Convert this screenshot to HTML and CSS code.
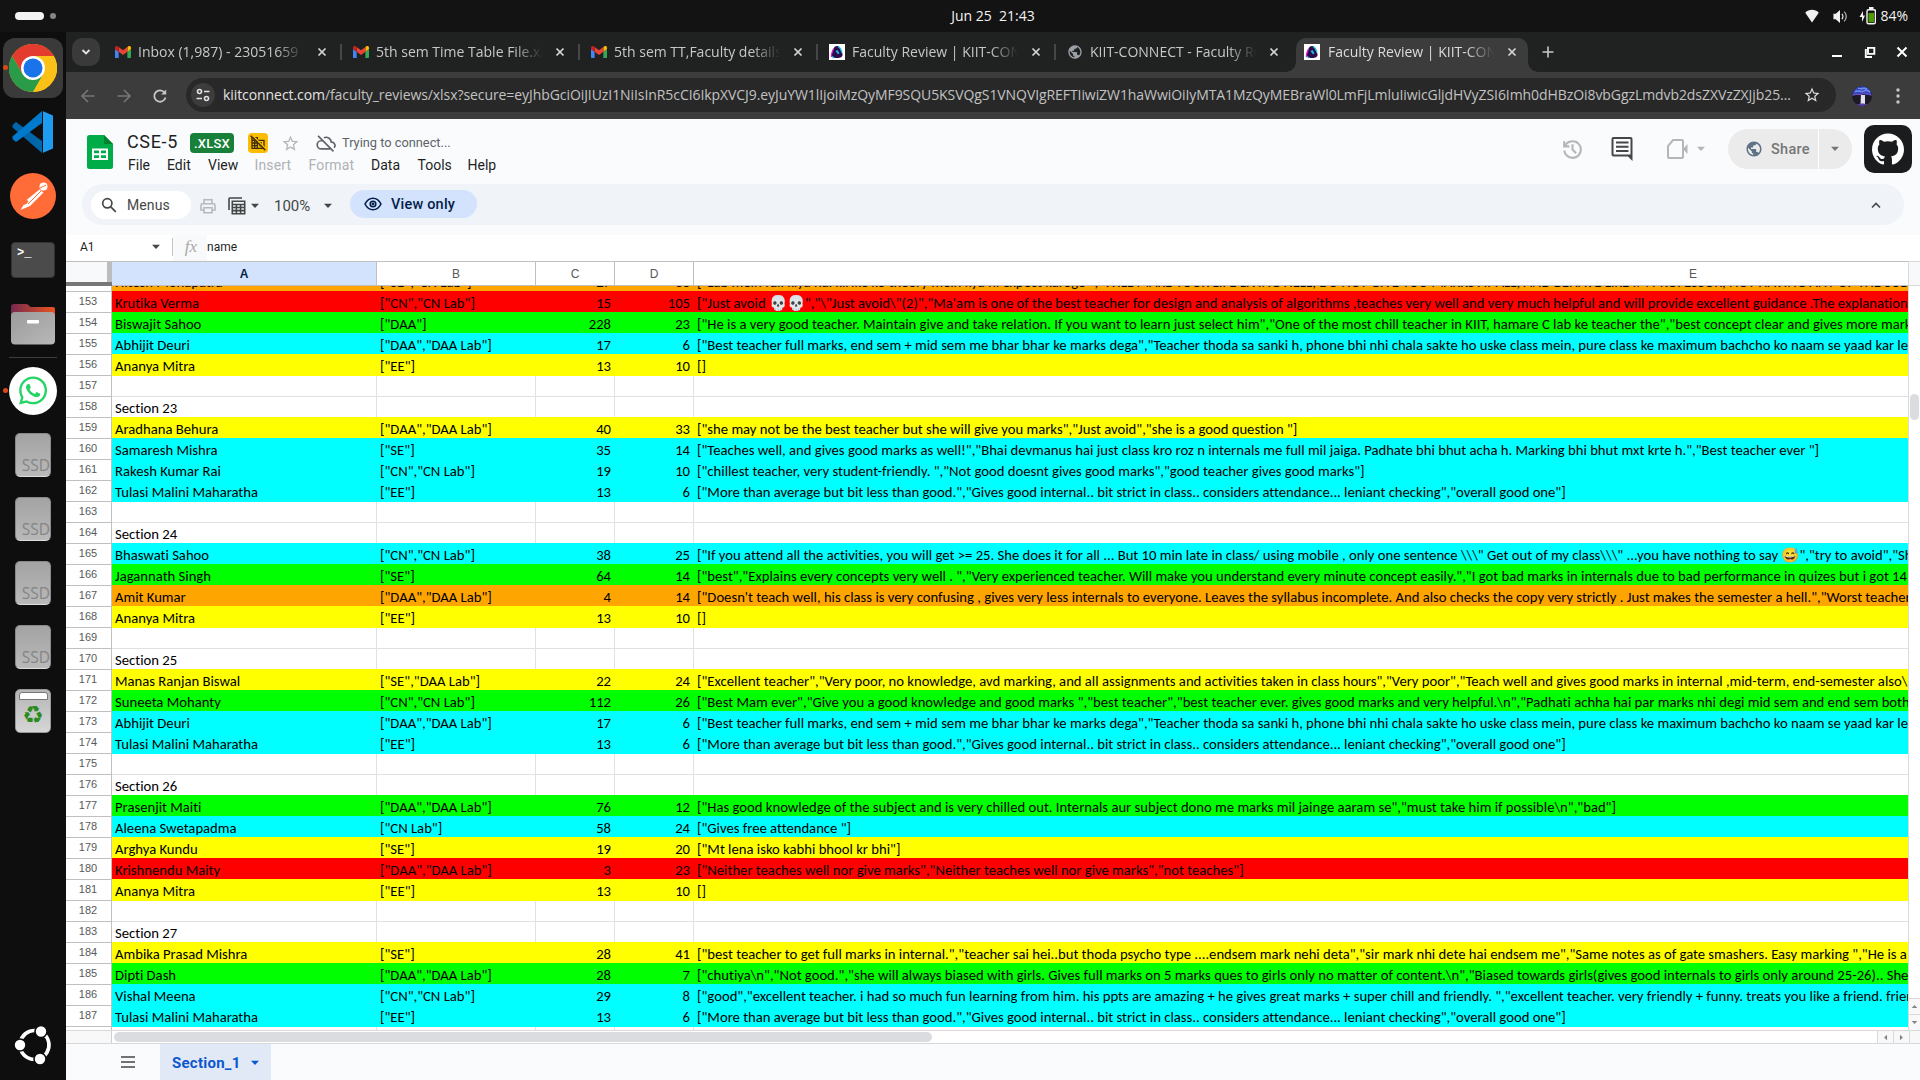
FILE: index.html
```
<!DOCTYPE html>
<html lang="en">
<head>
<meta charset="utf-8">
<title>Faculty Review | KIIT-CONNECT</title>
<link rel="stylesheet" href="styles.css">
</head>
<body>
<svg class="defs" width="0" height="0" aria-hidden="true">
  <symbol id="gmail" viewBox="52 42 88 66">
    <path fill="#4285f4" d="M58 108h14V74L52 59v43c0 3.32 2.69 6 6 6"/>
    <path fill="#34a853" d="M120 108h14c3.32 0 6-2.69 6-6V59l-20 15"/>
    <path fill="#fbbc04" d="M120 48v26l20-15v-8c0-7.42-8.47-11.65-14.4-7.2"/>
    <path fill="#ea4335" d="M72 74V48l24 18 24-18v26L96 92"/>
    <path fill="#c5221f" d="M52 51v8l20 15V48l-5.6-4.2c-5.94-4.45-14.4-.22-14.4 7.2"/>
  </symbol>
  <symbol id="kiit" viewBox="0 0 16 16">
    <rect width="16" height="16" fill="#fff"/>
    <path fill="#2b0b4e" d="M8 2c2 0 3 1 4 4l1.500 4c.5 3-2 4-5.500 4s-6-1-5.500-4L4 6c1-3 2-4 4-4z"/>
    <path fill="none" stroke="#e21bd0" stroke-width="1.300" d="M2.500 13C2 10 3.500 7 4.500 5"/>
    <path fill="none" stroke="#20c7e8" stroke-width="1.300" d="M9 2.500c2 .5 3 3 4 6M3 12.500l2 1.500"/>
    <path fill="#18b8d8" d="M6.500 7l2-1 2 3-1.500 1.500z"/>
  </symbol>
  <symbol id="x" viewBox="0 0 10 10"><path d="M1.500 1.500l7 7M8.500 1.500l-7 7" fill="none" stroke="currentColor" stroke-width="1.700"/></symbol>
  <symbol id="caret" viewBox="0 0 10 6"><path d="M1 .8h8L5 5z" fill="currentColor"/></symbol>
  <symbol id="star" viewBox="0 0 24 24"><path fill="currentColor" d="M22 9.240l-7.190-.62L12 2 9.190 8.630 2 9.240l5.460 4.730L5.820 21 12 17.270 18.180 21l-1.630-7.030L22 9.240zM12 15.400l-3.760 2.270 1-4.280-3.320-2.880 4.380-.38L12 6.100l1.710 4.040 4.380.38-3.320 2.880 1 4.280L12 15.400z"/></symbol>
  <symbol id="globe" viewBox="0 0 24 24"><path fill="currentColor" d="M12 2C6.480 2 2 6.480 2 12s4.480 10 10 10 10-4.480 10-10S17.520 2 12 2zm-1 17.930c-3.950-.49-7-3.850-7-7.930 0-.62.08-1.210.21-1.790L9 15v1c0 1.100.9 2 2 2v1.930zm6.900-2.540c-.26-.81-1-1.390-1.900-1.390h-1v-3c0-.55-.45-1-1-1H8v-2h2c.55 0 1-.45 1-1V7h2c1.100 0 2-.9 2-2v-.41c2.930 1.190 5 4.060 5 7.410 0 2.080-.8 3.970-2.100 5.390z"/></symbol>
</svg>

<header class="sysbar">
  <div class="workspaces"><i class="ws-on"></i><i class="ws-off"></i></div>
  <div class="clock">Jun 25&nbsp; 21:43</div>
  <div class="tray">
    <svg class="wifi" viewBox="0 0 16 16"><path fill="#f2f2f2" d="M8 15.500L.3 4.200C4.500-.2 11.500-.2 15.700 4.200z"/></svg>
    <svg class="vol" viewBox="0 0 16 16"><path fill="#f2f2f2" d="M1 5h2.500L8 1v14l-4.500-4H1z"/><path fill="none" stroke="#f2f2f2" stroke-width="1.400" d="M10 5.200c1.400 1.500 1.400 4.100 0 5.600"/><path fill="none" stroke="#aaa" stroke-width="1.400" d="M12.400 2.800c3 3 3 7.400 0 10.400"/></svg>
    <svg class="bat" viewBox="0 0 17 18"><path fill="#f2f2f2" d="M4 4L.5 10H3v5l3-6.500H4z"/><rect x="8" y="2.700" width="8.400" height="14" rx="1.500" fill="none" stroke="#f2f2f2" stroke-width="1.400"/><path fill="#f2f2f2" d="M10 0h4.500v2.500H10z"/><path fill="#4e9a06" d="M9.500 6h5.500v9.300H9.500z"/></svg>
    <span>84%</span>
  </div>
</header>

<div class="desktop">
<nav class="dock">
  <div class="slot running"><div class="active-tile">
    <svg width="48" height="48" viewBox="0 0 48 48"><circle cx="24" cy="24" r="24" fill="#fbc116"/><path fill="#e33b2e" d="M24 12h20.800A24 24 0 0 0 3.200 12l10.400 18z"/><path fill="#2a9b48" d="M13.600 30L3.200 12A24 24 0 0 0 24 48l10.400-18z"/><path fill="#fbc116" d="M44.800 12H24l10.400 18L24 48a24 24 0 0 0 20.800-36z"/><circle cx="24" cy="24" r="12" fill="#fff"/><circle cx="24" cy="24" r="9.500" fill="#1a73e8"/></svg>
  </div></div>
  <div class="slot"><svg width="44" height="44" viewBox="0 0 44 44"><path fill="#0065a9" d="M5 12L1.500 15v2.500L31 43V31z"/><path fill="#007acc" d="M5 32l-3.500-3v-2.500L31 1v12z"/><path fill="#1f9cf0" d="M31 .8l11 4.700v33L31 43.200c1 0 1-1 1-2V3c0-1 0-2-1-2.200z"/></svg></div>
  <div class="slot"><svg width="46" height="46" viewBox="0 0 46 46"><circle cx="23" cy="23" r="23" fill="#ff6c37"/><circle cx="33.500" cy="13.500" r="4" fill="#fff"/><path fill="#fff" d="M29.500 16.500l4 3L20 33l-9.500 4 3-5 3-1 2-3-2-1z"/><path stroke="#ff6c37" fill="none" d="M31 18L18 31M30 15l6-3"/></svg></div>
  <div class="slot"><div class="term">&gt;_</div></div>
  <div class="slot"><svg width="46" height="42" viewBox="0 0 46 42"><defs><linearGradient id="fg"><stop offset="0" stop-color="#77294f"/><stop offset="1" stop-color="#e95420"/></linearGradient><linearGradient id="gg" x2="1" y2="1"><stop offset="0" stop-color="#9b9b9b"/><stop offset="1" stop-color="#b8b8b8"/></linearGradient></defs><path fill="url(#fg)" d="M1 4q0-3 3-3h12q2 0 3 1.500L20.500 4H43q2 0 2 2v10H1z"/><rect x="1" y="9" width="44" height="32.500" rx="4" fill="url(#gg)"/><rect x="17" y="17" width="12" height="3.500" rx="1" fill="#fff"/></svg></div>
  <hr class="dock-rule">
  <div class="slot running"><svg width="48" height="48" viewBox="0 0 48 48"><circle cx="24" cy="24" r="24" fill="#fff"/><g transform="translate(10 9.500) scale(1.170)"><path fill="#25d366" d="M17.472 14.382c-.297-.149-1.758-.867-2.030-.967-.273-.099-.471-.148-.67.150-.197.297-.767.966-.94 1.164-.173.199-.347.223-.644.075-.297-.150-1.255-.463-2.390-1.475-.883-.788-1.480-1.761-1.653-2.059-.173-.297-.018-.458.130-.606.134-.133.298-.347.446-.52.149-.174.198-.298.298-.497.099-.198.050-.371-.025-.52-.075-.149-.669-1.612-.916-2.207-.242-.579-.487-.5-.669-.51-.173-.008-.371-.010-.57-.010-.198 0-.52.074-.792.372-.272.297-1.040 1.016-1.040 2.479 0 1.462 1.065 2.875 1.213 3.074.149.198 2.096 3.200 5.077 4.487.709.306 1.262.489 1.694.625.712.227 1.360.195 1.871.118.571-.085 1.758-.719 2.006-1.413.248-.694.248-1.289.173-1.413-.074-.124-.272-.198-.57-.347m-5.421 7.403h-.004a9.870 9.870 0 01-5.031-1.378l-.361-.214-3.741.982.998-3.648-.235-.374a9.860 9.860 0 01-1.510-5.260c.001-5.450 4.436-9.884 9.888-9.884 2.640 0 5.122 1.030 6.988 2.898a9.825 9.825 0 012.893 6.994c-.003 5.450-4.437 9.884-9.885 9.884m8.413-18.297A11.815 11.815 0 0012.050 0C5.495 0 .160 5.335.157 11.892c0 2.096.547 4.142 1.588 5.945L.057 24l6.305-1.654a11.882 11.882 0 005.683 1.448h.005c6.554 0 11.890-5.335 11.893-11.893a11.821 11.821 0 00-3.480-8.413z"/></g></svg></div>
  <div class="slot"><div class="ssd">SSD</div></div>
  <div class="slot"><div class="ssd">SSD</div></div>
  <div class="slot"><div class="ssd">SSD</div></div>
  <div class="slot"><div class="ssd">SSD</div></div>
  <div class="slot"><div class="trash"><i></i><b>♻</b></div></div>
  <div class="slot apps"><svg width="40" height="40" viewBox="0 0 40 40"><g fill="none" stroke="#fff" stroke-width="3.600"><circle cx="21.500" cy="20" r="14.500" stroke-dasharray="25.400 4.970" stroke-dashoffset="-2.500" transform="rotate(-60 21.500 20)"/></g><g fill="#fff" stroke="#0e0e0e" stroke-width="1.600"><circle cx="7" cy="20" r="6"/><circle cx="28" cy="6.500" r="6"/><circle cx="27" cy="34" r="6"/></g></svg></div>
</nav>

<main class="browser">
  <div class="tabstrip">
    <div class="tabsearch"><svg width="10" height="8" viewBox="0 0 10 8"><path d="M1.500 2L5 5.500 8.500 2" fill="none" stroke="#e3e3e3" stroke-width="1.800"/></svg></div>
    <div class="tab"><svg class="fav"><use href="#gmail"/></svg><span>Inbox (1,987) - 23051659</span><svg class="close"><use href="#x"/></svg></div>
    <div class="tab"><svg class="fav"><use href="#gmail"/></svg><span>5th sem Time Table File.xlsx</span><svg class="close"><use href="#x"/></svg></div>
    <div class="tab"><svg class="fav"><use href="#gmail"/></svg><span>5th sem TT,Faculty details</span><svg class="close"><use href="#x"/></svg></div>
    <div class="tab"><svg class="fav"><use href="#kiit"/></svg><span>Faculty Review | KIIT-CONNECT</span><svg class="close"><use href="#x"/></svg></div>
    <div class="tab last"><svg class="fav grey"><use href="#globe"/></svg><span>KIIT-CONNECT - Faculty Review</span><svg class="close"><use href="#x"/></svg></div>
    <div class="tab current"><svg class="fav"><use href="#kiit"/></svg><span>Faculty Review | KIIT-CONNECT</span><svg class="close"><use href="#x"/></svg></div>
    <svg class="newtab" viewBox="0 0 12 12"><path d="M6 .5v11M.5 6h11" stroke="#c7c7c7" stroke-width="1.600"/></svg>
    <div class="winbtns">
      <svg width="12" height="12" viewBox="0 0 12 12"><path d="M1 10h10" stroke="#fff" stroke-width="2"/></svg>
      <svg width="12" height="12" viewBox="0 0 12 12"><path d="M4 1.900h6.300v6H4zM1.800 3v8H8" fill="none" stroke="#fff" stroke-width="1.900"/></svg>
      <svg width="12" height="12" viewBox="0 0 12 12"><path d="M1.500 1.500l9 9M10.500 1.500l-9 9" stroke="#fff" stroke-width="2"/></svg>
    </div>
  </div>

  <div class="navbar">
    <svg class="nav-ic dim" viewBox="0 0 16 16"><path d="M14.500 8H2M8 2L2 8l6 6" fill="none" stroke="currentColor" stroke-width="1.700"/></svg>
    <svg class="nav-ic dim" viewBox="0 0 16 16"><path d="M1.500 8H14M8 2l6 6-6 6" fill="none" stroke="currentColor" stroke-width="1.700"/></svg>
    <svg class="nav-ic" viewBox="0 0 16 16"><path d="M13.500 9.500A5.700 5.700 0 1 1 12.500 4.500" fill="none" stroke="currentColor" stroke-width="1.800"/><path d="M14.200 1.500v5H9.200z" fill="currentColor"/></svg>
    <div class="omnibox">
      <div class="siteinfo"><svg width="14" height="14" viewBox="0 0 14 14" fill="none" stroke="#e3e3e3" stroke-width="1.600"><circle cx="3.500" cy="3.500" r="2"/><path d="M8 3.500h5.500M.5 10.500H6"/><circle cx="10.500" cy="10.500" r="2"/></svg></div>
      <div class="url"><b>kiitconnect.com</b>/faculty_reviews/xlsx?secure=eyJhbGciOiJIUzI1NiIsInR5cCI6IkpXVCJ9.eyJuYW1lIjoiMzQyMF9SQU5KSVQgS1VNQVIgREFTIiwiZW1haWwiOiIyMTA1MzQyMEBraWl0LmFjLmluIiwicGljdHVyZSI6Imh0dHBzOi8vbGgzLmdvb2dsZXVzZXJjb25…</div>
      <svg class="bookmark"><use href="#star"/></svg>
    </div>
    <svg class="avatar" viewBox="0 0 20 20"><clipPath id="ac"><circle cx="10" cy="10" r="10"/></clipPath><g clip-path="url(#ac)"><rect width="20" height="20" fill="#1c1a26"/><path fill="#3347b8" d="M0 10C1 3 5 0 10 0s9 3 10 10c-3-2-6 0-8-2-4 2-8 0-12 2z"/><path fill="none" stroke="#6f8df0" stroke-width="1.500" d="M3 6c3-3 6 1 9-1s4 0 6 1M6 2c3 2 6-1 9 1"/><path fill="none" stroke="#8d4bc0" d="M1 9c4-2 6 1 9-1s6 0 9 1"/><path fill="#e6e0ea" d="M9 9h4v9H8.500z"/><path fill="#5b3fb0" d="M4 19c3-2 9-2 12 0v1H4z"/></g></svg>
    <svg class="dots" viewBox="0 0 4 16" fill="#c7c7c7"><circle cx="2" cy="2" r="1.700"/><circle cx="2" cy="8" r="1.700"/><circle cx="2" cy="14" r="1.700"/></svg>
  </div>

  <section class="sheets">
    <div class="dochead">
      <svg class="logo" viewBox="0 0 26 34"><path fill="#00ac47" d="M2.500 0H17l9 9v22.500q0 2.500-2.500 2.500h-21Q0 34 0 31.500v-29Q0 0 2.500 0z"/><path fill="#00832d" d="M17 0l9 9h-9z"/><path fill="#fff" fill-rule="evenodd" d="M5 13.500h16V25H5zm2 2v2.700h5v-2.700zm7 0v2.700h5v-2.700zm-7 4.700V23h5v-2.800zm7 0V23h5v-2.800z"/></svg>
      <div class="titles">
        <div class="title-row">
          <span class="doc-name">CSE-5</span><span class="xlsx">.XLSX</span>
          <span class="org"><svg width="16" height="16" viewBox="0 0 24 24"><path fill="#402f00" fill-rule="evenodd" d="M2 3h10v4h10v14H2zm2 2v2h2V5zm4 0v2h2V5zM4 9v2h2V9zm4 0v2h2V9zm-4 4v2h2v-2zm4 0v2h2v-2zm-4 4v2h2v-2zm4 0v2h2v-2zm4-8v10h8V9zm2 2h4v2h-4zm0 4h4v2h-4z"/><path stroke="#fbbc04" stroke-width="2" d="M3 0l21 21"/><path stroke="#402f00" stroke-width="2.200" d="M1 1l22 22"/></svg></span>
          <svg class="fav-star"><use href="#star"/></svg>
          <svg class="cloud" viewBox="0 0 24 24"><path fill="none" stroke="#5f6368" stroke-width="2" d="M9.500 5.600A6.500 6.500 0 0 1 18.400 11 4 4 0 0 1 21.700 17.700M18 19H6.500a4.800 4.800 0 0 1-.4-9.700L8 9M2.500 3.500l18.500 18.500"/></svg>
          <span class="status">Trying to connect...</span>
        </div>
        <div class="menus"><span>File</span><span>Edit</span><span>View</span><span class="off">Insert</span><span class="off">Format</span><span>Data</span><span>Tools</span><span>Help</span></div>
      </div>
      <div class="actions">
        <svg class="history" viewBox="0 0 24 24"><path fill="#b4b6b9" d="M12 21q-3.450 0-6.010-2.290T3.050 13H5.100q.35 2.600 2.310 4.300T12 19q2.930 0 4.960-2.040T19 12t-2.040-4.960T12 5q-1.730 0-3.230.8T6.250 8H9v2H3V4h2v2.350q1.280-1.600 3.110-2.470T12 3q1.880 0 3.510.71t2.850 1.930 1.930 2.850T21 12t-.71 3.510-1.930 2.850-2.850 1.930T12 21zm2.800-4.800L11 12.400V7h2v4.600l3.200 3.200z"/></svg>
        <svg class="comment" viewBox="0 0 22 24"><path fill="#444746" fill-rule="evenodd" d="M2.500 0h17Q21.500 0 21.500 2v22L17 19.500H2.500Q.5 19.500.5 17.500V2Q.5 0 2.500 0zm0 2v15.500h17V2z"/><path stroke="#444746" stroke-width="2" d="M5 5.500h12.500M5 9.700h12.500M5 14h12.500"/></svg>
        <svg class="camera" viewBox="0 0 22 20"><path fill="none" stroke="#b4b6b9" stroke-width="2" d="M6 1h9q1 0 1 1v16q0 1-1 1H2q-1 0-1-1V7z"/><path fill="#b4b6b9" d="M16 10L20.500 5v10z"/></svg>
        <svg class="caret cam-caret"><use href="#caret"/></svg>
        <div class="share"><span class="share-main"><svg class="globe"><use href="#globe"/></svg>Share</span><span class="share-more"><svg class="caret"><use href="#caret"/></svg></span></div>
        <div class="github"><svg width="32" height="32" viewBox="0 0 24 24"><path fill="#fff" d="M12 .297c-6.630 0-12 5.373-12 12 0 5.303 3.438 9.800 8.205 11.385.6.113.82-.258.82-.577 0-.285-.010-1.040-.015-2.040-3.338.724-4.042-1.610-4.042-1.610C4.422 18.070 3.633 17.700 3.633 17.700c-1.087-.744.084-.729.084-.729 1.205.084 1.838 1.236 1.838 1.236 1.070 1.835 2.809 1.305 3.495.998.108-.776.417-1.305.760-1.605-2.665-.3-5.466-1.332-5.466-5.930 0-1.310.465-2.380 1.235-3.220-.135-.303-.54-1.523.105-3.176 0 0 1.005-.322 3.300 1.230.96-.267 1.980-.399 3-.405 1.020.006 2.040.138 3 .405 2.280-1.552 3.285-1.230 3.285-1.230.645 1.653.240 2.873.120 3.176.765.840 1.230 1.910 1.230 3.220 0 4.610-2.805 5.625-5.475 5.920.420.360.810 1.096.810 2.220 0 1.606-.015 2.896-.015 3.286 0 .315.210.690.825.570C20.565 22.092 24 17.592 24 12.297c0-6.627-5.373-12-12-12"/></svg></div>
      </div>
    </div>

    <div class="toolbar">
      <div class="search-menus"><svg width="16" height="16" viewBox="0 0 16 16" fill="none" stroke="#444746" stroke-width="1.700"><circle cx="6.300" cy="6.300" r="4.600"/><path d="M9.800 9.800l5 5"/></svg>Menus</div>
      <svg class="print" viewBox="0 0 16 16" fill="none" stroke="#b7babd" stroke-width="1.600"><path d="M4 5.500V1.800h8v3.700M4 12H1V7.200q0-1.500 1.500-1.500h11q1.500 0 1.500 1.500V12h-3M4 9.800h8v5H4z"/></svg>
      <svg class="views" viewBox="0 0 18 18" fill="none" stroke="#444746" stroke-width="1.600"><path d="M1 13V1.800q0-.8.8-.8H14M4.300 4.300h12.400v12.400H4.300zM4.300 7.500h12.400M4.300 10.500h12.400M4.300 13.600h12.400M8.400 7.500v9M12.600 7.500v9"/></svg>
      <svg class="caret c1"><use href="#caret"/></svg>
      <span class="zoom">100%</span>
      <svg class="caret c2"><use href="#caret"/></svg>
      <div class="view-only"><svg width="18" height="14" viewBox="0 0 18 14" fill="none" stroke="#041e49" stroke-width="1.600"><path d="M1 7q3-5.800 8-5.800T17 7q-3 5.800-8 5.800T1 7z"/><circle cx="9" cy="7" r="2.800"/><circle cx="9" cy="7" r=".6"/></svg>View only</div>
      <svg class="collapse" viewBox="0 0 10 8"><path d="M1 6.500l4-4 4 4" fill="none" stroke="#444746" stroke-width="1.600"/></svg>
    </div>

    <div class="formula">
      <div class="namebox">A1<svg class="caret"><use href="#caret"/></svg></div>
      <div class="fx">fx</div>
      <div class="fval">name</div>
    </div>

    <div class="gridwrap">
      <div class="grid">
        <div class="colheads"><div class="corner"></div><div class="sel">A</div><div>B</div><div>C</div><div>D</div><div>E</div></div>
        <div class="rows">
          <div class="row o"><i>152</i><p>Hitesh Mohapatra</p><p>["SE","CN Lab"]</p><p>27</p><p>33</p><p>["Lab mein full kiya nai kiHke ko theory mein kya hi expect karoge ","WILL MAKE YOUR LIFE LIVING HELL, DO NOT GIVE YOU MARKS AT ALL, AND BEHAVE LIKE IM PROFESSOR, NOT HAVING ANY OF THE SUBJECT</p></div>
          <div class="row r"><i>153</i><p>Krutika Verma</p><p>["CN","CN Lab"]</p><p>15</p><p>105</p><p>["Just avoid 💀💀","\"Just avoid\"(2)","Ma'am is one of the best teacher for design and analysis of algorithms ,teaches very well and very much helpful and will provide excellent guidance .The explanation</p></div>
          <div class="row g"><i>154</i><p>Biswajit Sahoo</p><p>["DAA"]</p><p>228</p><p>23</p><p>["He is a very good teacher. Maintain give and take relation. If you want to learn just select him","One of the most chill teacher in KIIT, hamare C lab ke teacher the","best concept clear and gives more marks</p></div>
          <div class="row c"><i>155</i><p>Abhijit Deuri</p><p>["DAA","DAA Lab"]</p><p>17</p><p>6</p><p>["Best teacher full marks, end sem + mid sem me bhar bhar ke marks dega","Teacher thoda sa sanki h, phone bhi nhi chala sakte ho uske class mein, pure class ke maximum bachcho ko naam se yaad kar le</p></div>
          <div class="row y"><i>156</i><p>Ananya Mitra</p><p>["EE"]</p><p>13</p><p>10</p><p>[]</p></div>
          <div class="row"><i>157</i><p></p><p></p><p></p><p></p><p></p></div>
          <div class="row"><i>158</i><p>Section 23</p><p></p><p></p><p></p><p></p></div>
          <div class="row y"><i>159</i><p>Aradhana Behura</p><p>["DAA","DAA Lab"]</p><p>40</p><p>33</p><p>["she may not be the best teacher but she will give you marks","Just avoid","she is a good question "]</p></div>
          <div class="row c"><i>160</i><p>Samaresh Mishra</p><p>["SE"]</p><p>35</p><p>14</p><p>["Teaches well, and gives good marks as well!","Bhai devmanus hai just class kro roz n internals me full mil jaiga. Padhate bhi bhut acha h. Marking bhi bhut mxt krte h.","Best teacher ever "]</p></div>
          <div class="row c"><i>161</i><p>Rakesh Kumar Rai</p><p>["CN","CN Lab"]</p><p>19</p><p>10</p><p>["chillest teacher, very student-friendly. ","Not good doesnt gives good marks","good teacher gives good marks"]</p></div>
          <div class="row c"><i>162</i><p>Tulasi Malini Maharatha</p><p>["EE"]</p><p>13</p><p>6</p><p>["More than average but bit less than good.","Gives good internal.. bit strict in class.. considers attendance... leniant checking","overall good one"]</p></div>
          <div class="row"><i>163</i><p></p><p></p><p></p><p></p><p></p></div>
          <div class="row"><i>164</i><p>Section 24</p><p></p><p></p><p></p><p></p></div>
          <div class="row c"><i>165</i><p>Bhaswati Sahoo</p><p>["CN","CN Lab"]</p><p>38</p><p>25</p><p>["If you attend all the activities, you will get &gt;= 25. She does it for all ... But 10 min late in class/ using mobile , only one sentence \\\" Get out of my class\\\" ...you have nothing to say 😅","try to avoid","She</p></div>
          <div class="row g"><i>166</i><p>Jagannath Singh</p><p>["SE"]</p><p>64</p><p>14</p><p>["best","Explains every concepts very well . ","Very experienced teacher. Will make you understand every minute concept easily.","I got bad marks in internals due to bad performance in quizes but i got 14</p></div>
          <div class="row o"><i>167</i><p>Amit Kumar</p><p>["DAA","DAA Lab"]</p><p>4</p><p>14</p><p>["Doesn't teach well, his class is very confusing , gives very less internals to everyone. Leaves the syllabus incomplete. And also checks the copy very strictly . Just makes the semester a hell.","Worst teacher</p></div>
          <div class="row y"><i>168</i><p>Ananya Mitra</p><p>["EE"]</p><p>13</p><p>10</p><p>[]</p></div>
          <div class="row"><i>169</i><p></p><p></p><p></p><p></p><p></p></div>
          <div class="row"><i>170</i><p>Section 25</p><p></p><p></p><p></p><p></p></div>
          <div class="row y"><i>171</i><p>Manas Ranjan Biswal</p><p>["SE","DAA Lab"]</p><p>22</p><p>24</p><p>["Excellent teacher","Very poor, no knowledge, avd marking, and all assignments and activities taken in class hours","Very poor","Teach well and gives good marks in internal ,mid-term, end-semester also\</p></div>
          <div class="row g"><i>172</i><p>Suneeta Mohanty</p><p>["CN","CN Lab"]</p><p>112</p><p>26</p><p>["Best Mam ever","Give you a good knowledge and good marks ","best teacher","best teacher ever. gives good marks and very helpful.\n","Padhati achha hai par marks nhi degi mid sem and end sem both</p></div>
          <div class="row c"><i>173</i><p>Abhijit Deuri</p><p>["DAA","DAA Lab"]</p><p>17</p><p>6</p><p>["Best teacher full marks, end sem + mid sem me bhar bhar ke marks dega","Teacher thoda sa sanki h, phone bhi nhi chala sakte ho uske class mein, pure class ke maximum bachcho ko naam se yaad kar le</p></div>
          <div class="row c"><i>174</i><p>Tulasi Malini Maharatha</p><p>["EE"]</p><p>13</p><p>6</p><p>["More than average but bit less than good.","Gives good internal.. bit strict in class.. considers attendance... leniant checking","overall good one"]</p></div>
          <div class="row"><i>175</i><p></p><p></p><p></p><p></p><p></p></div>
          <div class="row"><i>176</i><p>Section 26</p><p></p><p></p><p></p><p></p></div>
          <div class="row g"><i>177</i><p>Prasenjit Maiti</p><p>["DAA","DAA Lab"]</p><p>76</p><p>12</p><p>["Has good knowledge of the subject and is very chilled out. Internals aur subject dono me marks mil jainge aaram se","must take him if possible\n","bad"]</p></div>
          <div class="row c"><i>178</i><p>Aleena Swetapadma</p><p>["CN Lab"]</p><p>58</p><p>24</p><p>["Gives free attendance "]</p></div>
          <div class="row y"><i>179</i><p>Arghya Kundu</p><p>["SE"]</p><p>19</p><p>20</p><p>["Mt lena isko kabhi bhool kr bhi"]</p></div>
          <div class="row r"><i>180</i><p>Krishnendu Maity</p><p>["DAA","DAA Lab"]</p><p>3</p><p>23</p><p>["Neither teaches well nor give marks","Neither teaches well nor give marks","not teaches"]</p></div>
          <div class="row y"><i>181</i><p>Ananya Mitra</p><p>["EE"]</p><p>13</p><p>10</p><p>[]</p></div>
          <div class="row"><i>182</i><p></p><p></p><p></p><p></p><p></p></div>
          <div class="row"><i>183</i><p>Section 27</p><p></p><p></p><p></p><p></p></div>
          <div class="row y"><i>184</i><p>Ambika Prasad Mishra</p><p>["SE"]</p><p>28</p><p>41</p><p>["best teacher to get full marks in internal.","teacher sai hei..but thoda psycho type ....endsem mark nehi deta","sir mark nhi dete hai endsem me","Same notes as of gate smashers. Easy marking ","He is a</p></div>
          <div class="row g"><i>185</i><p>Dipti Dash</p><p>["DAA","DAA Lab"]</p><p>28</p><p>7</p><p>["chutiya\n","Not good.","she will always biased with girls. Gives full marks on 5 marks ques to girls only no matter of content.\n","Biased towards girls(gives good internals to girls only around 25-26).. She</p></div>
          <div class="row c"><i>186</i><p>Vishal Meena</p><p>["CN","CN Lab"]</p><p>29</p><p>8</p><p>["good","excellent teacher. i had so much fun learning from him. his ppts are amazing + he gives great marks + super chill and friendly. ","excellent teacher. very friendly + funny. treats you like a friend. friendly</p></div>
          <div class="row c"><i>187</i><p>Tulasi Malini Maharatha</p><p>["EE"]</p><p>13</p><p>6</p><p>["More than average but bit less than good.","Gives good internal.. bit strict in class.. considers attendance... leniant checking","overall good one"]</p></div>
          <div class="row"><i></i><p></p><p></p><p></p><p></p><p></p></div>
        </div>
      </div>
      <div class="vscroll"><div class="vhead"></div><div class="vtrack"><div class="vthumb"></div></div><div class="sbtn"><svg class="up"><use href="#caret"/></svg></div><div class="sbtn"><svg><use href="#caret"/></svg></div></div>
    </div>
    <div class="hscroll"><div class="hcorner"></div><div class="htrack"><div class="hthumb"></div></div><div class="hbtn"><svg class="left"><use href="#caret"/></svg></div><div class="hbtn"><svg class="right"><use href="#caret"/></svg></div><div class="hend"></div></div>
    <footer class="sheetbar"><svg width="14" height="12" viewBox="0 0 14 12"><path d="M0 1h14M0 6h14M0 11h14" stroke="#444746" stroke-width="1.700"/></svg><div class="sheet-tab">Section_1<svg class="caret"><use href="#caret"/></svg></div></footer>
  </section>
</main>
</div>
</body>
</html>
```
FILE: styles.css
```
* { box-sizing: border-box; }
body { margin: 0; width: 1920px; height: 1080px; overflow: hidden; background: #0e0e0e; font-family: Roboto, "Liberation Sans", sans-serif; display: flex; flex-direction: column; }
svg { display: block; flex: none; }
.defs { position: absolute; }

/* system bar */
.sysbar { height: 32px; flex: none; background: #131313; color: #f2f2f2; font: 14px/32px "Open Sans", "Noto Sans", sans-serif; display: grid; grid-template-columns: 1fr auto 1fr; }
.workspaces { display: flex; align-items: center; gap: 6px; padding-left: 15px; }
.ws-on { width: 29px; height: 8px; border-radius: 4px; background: #f4f4f4; }
.ws-off { width: 6px; height: 6px; border-radius: 50%; background: #868686; }
.clock { line-height: 31px; padding-left: 66px; white-space: pre; }
.tray { display: flex; align-items: center; justify-content: flex-end; padding-right: 12px; }
.wifi { width: 16px; height: 14px; margin-right: 12px; }
.vol { width: 16px; height: 15px; margin-right: 11px; }
.bat { width: 17px; height: 18px; margin-right: 4px; }

.desktop { flex: 1; display: flex; min-height: 0; }

/* dock */
.dock { width: 66px; flex: none; background: #0e0e0e; display: flex; flex-direction: column; padding: 4px 0 3px; }
.slot { height: 64px; flex: none; display: flex; align-items: center; justify-content: center; position: relative; }
.running::before { content: ""; position: absolute; left: 3px; top: 29px; width: 5px; height: 5px; border-radius: 50%; background: #dd4814; z-index: 1; }
.active-tile { width: 60px; height: 60px; border-radius: 12px; background: #3a3a3a; display: flex; align-items: center; justify-content: center; }
.term { width: 44px; height: 36px; border-radius: 4px; background: #4b4b4b; border: 1px solid #333; color: #fff; font: bold 12px/18px "Liberation Mono", monospace; padding: 1px 5px; }
.dock-rule { width: 48px; height: 1px; border: 0; background: #3d3d3d; margin: 1px auto; flex: none; }
.ssd { width: 36px; height: 44px; border-radius: 5px; background: linear-gradient(#a3a3a3, #b9b9b9); border: 1px solid #8a8a8a; border-bottom-color: #ddd; color: #858585; font: 15.5px/16px "Open Sans", sans-serif; display: flex; align-items: flex-end; justify-content: flex-end; padding-bottom: 3px; }
.trash { width: 36px; height: 44px; border-radius: 5px; background: linear-gradient(#b5b5b5, #d6d6d6); border: 1px solid #999; display: flex; flex-direction: column; align-items: center; }
.trash i { width: 29px; height: 8px; background: #fff; border: 1px solid #777; border-radius: 3px 3px 0 0; margin-top: 2px; }
.trash b { color: #2b8a1f; font: 24px/30px "DejaVu Sans", sans-serif; }
.apps { margin-top: auto; }

/* browser chrome */
.browser { flex: 1; min-width: 0; display: flex; flex-direction: column; font-family: "Open Sans", "Noto Sans", sans-serif; }
.tabstrip { height: 40px; flex: none; background: #202221; display: flex; align-items: flex-start; padding-left: 6px; }
.tabsearch { width: 28px; height: 28px; margin: 6px 0 0; border-radius: 10px; background: #3a3a3a; display: flex; align-items: center; justify-content: center; margin-right: 5px; }
.tab { width: 238px; height: 34px; margin-top: 6px; padding: 0 14px 0 10px; display: flex; align-items: center; color: #c7c7c7; font-size: 14px; position: relative; }
.tab::after { content: ""; position: absolute; right: 1px; top: 6px; width: 2px; height: 16px; background: #454746; }
.tab.last::after, .tab.current::after { display: none; }
.tab > * { transform: translateY(-3px); }
.fav { width: 16px; height: 16px; margin-right: 7px; }
.fav.grey { color: #9aa0a6; }
.tab span { width: 168px; overflow: hidden; white-space: nowrap; line-height: 24px; -webkit-mask-image: linear-gradient(90deg, #000 82%, transparent 99%); mask-image: linear-gradient(90deg, #000 82%, transparent 99%); }
.close { width: 10px; height: 10px; margin-left: 11px; color: #d6d6d6; }
.tab.current { width: 232px; padding: 0 10px 0 8px; background: #3c3c3c; border-radius: 10px 10px 0 0; margin: 6px 14px 0 1px; color: #dcdcdc; }
.tab.current .fav { margin-right: 8px; }
.tab.current::before { content: ""; position: absolute; left: -10px; right: -10px; bottom: 0; height: 10px; background: radial-gradient(circle at 0 0, transparent 9.500px, #3c3c3c 10px) left / 10px 10px no-repeat, radial-gradient(circle at 100% 0, transparent 9.500px, #3c3c3c 10px) right / 10px 10px no-repeat; transform: none; }
.newtab { width: 12px; height: 12px; margin: 14px 0 0; }
.winbtns { margin: 14px 12px 0 auto; display: flex; gap: 20.500px; }
.navbar { height: 47px; flex: none; background: #3c3c3c; display: flex; align-items: center; padding-left: 14px; }
.nav-ic { width: 16px; height: 16px; margin-right: 20px; color: #c7c7c7; }
.nav-ic.dim { color: #757575; }
.nav-ic:nth-child(3) { margin-right: 18px; }
.omnibox { width: 1650px; height: 34px; border-radius: 17px; background: #282828; display: flex; align-items: center; padding-left: 5px; margin-top: -1px; }
.siteinfo { width: 24px; height: 24px; border-radius: 50%; background: #3c3c3c; display: flex; align-items: center; justify-content: center; }
.url { width: 1580px; margin-left: 8px; color: #c2c2c2; font-size: 14px; line-height: 22px; letter-spacing: -.075px; white-space: nowrap; }
.url b { font-weight: 400; color: #e3e3e3; }
.bookmark { width: 18px; height: 18px; color: #dcdcdc; }
.avatar { width: 20px; height: 20px; margin-left: 16px; }
.dots { width: 4px; height: 16px; margin-left: 24px; }

/* sheets header */
.sheets { flex: 1; min-height: 0; background: #f9fbfd; display: flex; flex-direction: column; font-family: Roboto, "Liberation Sans", sans-serif; }
.caret { width: 10px; height: 6px; color: #444746; }
.dochead { height: 65px; flex: none; display: flex; padding-left: 21px; }
.logo { width: 26px; height: 34px; margin-top: 16px; }
.titles { margin-left: 14px; padding-top: 10px; }
.title-row { height: 26px; display: flex; align-items: center; }
.doc-name { font-size: 18px; color: #1f1f1f; letter-spacing: .65px; width: 63px; padding-bottom: 2px; }
.xlsx { width: 44px; height: 20px; margin-top: 2px; border-radius: 4px; background: #188038; color: #fff; font: 500 13px/21px Roboto, sans-serif; letter-spacing: .2px; text-align: center; }
.org { width: 20px; height: 20px; border-radius: 4px; background: #fbbc04; margin: 2px 0 0 14px; padding: 2px; }
.fav-star { width: 19px; height: 19px; margin: 2px 0 0 12.500px; color: #b4b6b9; }
.cloud { width: 20px; height: 20px; margin: 2px 0 0 16.500px; }
.status { font-size: 12.800px; color: #5f6368; margin-left: 6px; padding-top: 1px; }
.menus { display: grid; grid-template-columns: 39px 41px 46.500px 54px 62.500px 46.500px 50px 50px; font-size: 14px; line-height: 20px; color: #1f1f1f; padding-left: 1px; }
.menus .off { color: #b0b2b5; letter-spacing: .15px; }
.actions { margin-left: auto; display: flex; align-items: center; height: 64px; padding: 0 8px 4px 0; }
.history { width: 25px; height: 25px; margin-right: 26px; }
.comment { width: 22px; height: 24px; margin-right: 34px; }
.camera { width: 22px; height: 20px; margin-right: 7px; }
.cam-caret { color: #b4b6b9; margin-right: 22px; }
.share { width: 124px; height: 40px; border-radius: 20px; background: #ebebeb; color: #747775; display: flex; font: 500 14.500px Roboto, sans-serif; letter-spacing: .3px; margin-right: 12px; }
.share .caret { color: #747775; }
.share-main { width: 91px; display: flex; align-items: center; padding-left: 17px; border-right: 1.500px solid #fff; }
.globe { width: 18px; height: 18px; color: #5e7186; margin-right: 8px; }
.share-more { flex: 1; display: flex; align-items: center; padding-left: 11px; }
.github { width: 48px; height: 48px; border-radius: 10px; background: #1b1c1e; display: flex; align-items: center; justify-content: center; }

.toolbar { height: 41px; flex: none; margin: 0 16px 0 16px; border-radius: 21px; background: #f0f4f9; display: flex; align-items: center; padding-left: 9px; color: #444746; font-size: 14px; }
.search-menus { width: 100px; height: 28px; border-radius: 14px; background: #fff; display: flex; align-items: center; gap: 10px; padding-left: 10px; letter-spacing: .1px; }
.print { width: 16px; height: 16px; margin: 2px 0 0 9px; }
.views { width: 18px; height: 18px; margin: 2px 0 0 12px; }
.c1 { margin-left: 4px; margin-top: 2px; } .c2 { margin-left: 12px; margin-top: 2px; }
.zoom { margin-left: 14px; width: 37px; font-size: 15px; padding-top: 2px; }
.view-only { width: 127px; height: 28px; border-radius: 14px; background: #d3e3fd; color: #041e49; font: 500 14.500px Roboto, sans-serif; letter-spacing: .2px; display: flex; align-items: center; gap: 9px; padding: 1px 0 0 14px; margin: -2px 0 0 17px; }
.collapse { width: 10px; height: 8px; margin: 0 23px 0 auto; }

.formula { height: 26px; flex: none; margin-top: 10px; background: #fff; display: flex; font-size: 12px; color: #1f1f1f; }
.namebox { width: 107px; margin-top: 3px; height: 18px; border-right: 1px solid #c7c7c7; display: flex; align-items: center; justify-content: space-between; padding: 0 11px 0 14px; }
.fx { width: 34px; background: #f8f9fa; color: #a8a8a8; font: italic 17px/24px "Liberation Serif", serif; text-align: center; padding-left: 2px; }
.fval { line-height: 25px; }

/* grid */
.gridwrap { flex: 1; min-height: 0; display: flex; }
.grid { width: 1842px; display: flex; flex-direction: column; min-height: 0; background: #fff; }
.colheads { height: 25px; flex: none; display: grid; grid-template-columns: 46px 265px 159px 79px 79px 1214px; border-top: 1px solid #c0c0c0; border-bottom: 1px solid #c0c0c0; color: #575a5a; font: 12px/24px "Liberation Sans", sans-serif; text-align: center; }
.colheads div { border-right: 1px solid #c0c0c0; height: 23px; }
.colheads div:last-child { border-right: 0; padding-left: 995px; text-align: left; }
.colheads .sel { background: #d3e3fd; color: #041e49; font-weight: 700; }
.colheads .corner { background: #f8f9fa; border-right: 5px solid #bdbdbd; position: relative; }
.colheads .corner::after { content: ""; position: absolute; left: 0; right: -5px; bottom: -1px; height: 4px; background: #777; }
.rows { flex: 1; min-height: 0; overflow: hidden; }
.row:first-child { margin-top: -15px; }
.row { height: 21px; display: grid; grid-template-columns: 46px 265px 159px 79px 79px 1214px; }
.row i { border-right: 1px solid #c0c0c0; border-bottom: 1px solid #c0c0c0; font: 11px/19px "Liberation Sans", sans-serif; color: #575a5a; text-align: center; background: #fff; padding-right: 1px; }
.row p { margin: 0; padding: 0 3px; font: 14.667px/23px Carlito, Calibri, Lato, sans-serif; font-variant-ligatures: none; color: #000; white-space: pre; overflow: hidden; border-right: 1px solid #e1e1e1; border-bottom: 1px solid #e1e1e1; }
.row p:nth-child(4), .row p:nth-child(5) { text-align: right; }
.row p:last-child { border-right: 0; }
.y p, .c p, .g p, .o p, .r p { background: var(--fill); border-color: var(--fill); box-shadow: 0 -1px 0 var(--fill); }
.y { --fill: #ffff00; }
.c { --fill: #00ffff; }
.g { --fill: #00ff00; }
.o { --fill: #ffa500; }
.r { --fill: #ff0000; }

.vscroll { flex: 1; background: #fff; border-left: 1px solid #d9d9d9; display: flex; flex-direction: column; }
.vhead { height: 25px; border: 1px solid #d9d9d9; border-width: 1px 0; background: #f8f9fa; }
.vtrack { flex: 1; padding: 108px 1px 0; }
.vthumb { height: 26px; border-radius: 5px; background: #dadce0; }
.sbtn { height: 16px; border-top: 1px solid #d9d9d9; background: #f8f8f8; display: flex; align-items: center; justify-content: center; color: #80868b; }
.sbtn svg, .hbtn svg { width: 7px; height: 5px; }
.up { transform: rotate(180deg); }
.hscroll { height: 14px; flex: none; border: 1px solid #d9d9d9; border-width: 1px 0; background: #fff; display: flex; }
.hcorner { width: 46px; background: #f8f8f8; border-right: 1px solid #d0d0d0; }
.htrack { flex: 1; padding: 1px 2px; }
.hthumb { width: 818px; height: 10px; border-radius: 5px; background: #dadce0; }
.hbtn { width: 16px; border-left: 1px solid #d9d9d9; background: #f8f8f8; color: #80868b; display: flex; align-items: center; justify-content: center; }
.left { transform: rotate(90deg); }
.right { transform: rotate(-90deg); }
.hend { width: 11px; border-left: 1px solid #d9d9d9; background: #f8f8f8; }
.sheetbar { height: 36px; flex: none; display: flex; align-items: center; padding-left: 55px; background: #f9fbfd; }
.sheet-tab { height: 36px; width: 111px; margin-left: 25px; background: #e1e9f7; color: #0b57d0; font: 700 15px Roboto, sans-serif; letter-spacing: .25px; display: flex; align-items: center; justify-content: space-between; padding: 2px 11px 0 12px; }
.sheet-tab .caret { color: #0b57d0; }
```
